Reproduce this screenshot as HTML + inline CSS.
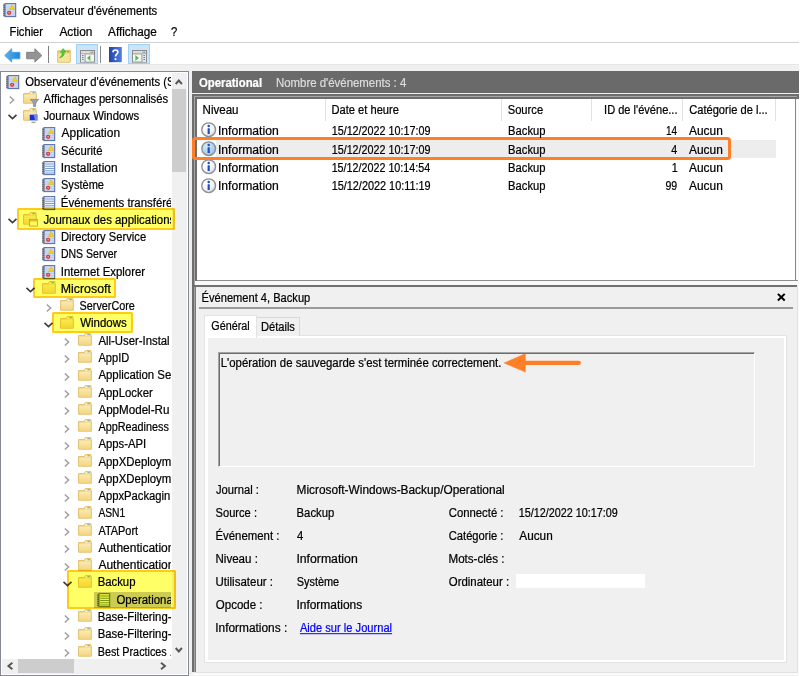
<!DOCTYPE html><html><head><meta charset="utf-8"><title>Observateur d'événements</title><style>
html,body{margin:0;padding:0}body{width:800px;height:676px;position:relative;overflow:hidden;background:#fff;font-family:"Liberation Sans",sans-serif;font-size:12px;color:#000}
.ic{position:absolute;overflow:visible}
.t{position:absolute;left:0;top:0;white-space:nowrap;-webkit-text-stroke:0.22px currentColor;line-height:16px;height:16px;transform-origin:0 0}
.b{font-weight:bold}
#tc{position:absolute;left:0;top:0;width:171.4px;height:658px;overflow:hidden}

</style></head><body>
<svg width="0" height="0" style="position:absolute"><defs><radialGradient id="ig1" cx=".35" cy=".3" r=".8"><stop offset="0" stop-color="#fff"/><stop offset=".6" stop-color="#f3f4f6"/><stop offset="1" stop-color="#c9ccd2"/></radialGradient><radialGradient id="ig2" cx=".35" cy=".3" r=".8"><stop offset="0" stop-color="#d6e8f7"/><stop offset=".6" stop-color="#b4d2ec"/><stop offset="1" stop-color="#8fb4d8"/></radialGradient><linearGradient id="fg" x1="0" x2="0" y1="0" y2="1"><stop offset="0" stop-color="#fbeab2"/><stop offset="1" stop-color="#f4d683"/></linearGradient><linearGradient id="hg" x1="0" x2="1"><stop offset="0" stop-color="#2443a8"/><stop offset="1" stop-color="#4f7fe6"/></linearGradient><linearGradient id="bg1" x1="0" x2="1"><stop offset="0" stop-color="#58b4f0"/><stop offset="1" stop-color="#1f84d8"/></linearGradient></defs></svg>
<svg class="ic" style="left:3.10px;top:2.90px" width="13.3" height="14.2" viewBox="0 0 12.8 14.2" preserveAspectRatio="none"><rect x="0.2" y="1" width="2.4" height="12.4" fill="#9a9a9a"/><rect x="1.9" y="0.6" width="10.3" height="13" fill="#cfdbf0" stroke="#5e73ac" stroke-width="1.1"/><path d="M3.2 4h8.4M3.2 6.2h8.4M3.2 8.4h8.4M3.2 10.6h8.4M3.2 12.4h8.4" stroke="#b7c8e6" stroke-width=".8"/><path d="M0.2 2.4h2M0.2 4.4h2M0.2 6.4h2M0.2 8.4h2M0.2 10.4h2M0.2 12.4h2" stroke="#6a6a6a" stroke-width=".9"/><path d="M8.7 1.8 L11.3 6.5 H6.1z" fill="#f2d21c" stroke="#dcb814" stroke-width=".5" stroke-linejoin="round"/><circle cx="5.9" cy="9.8" r="2.1" fill="#d63a44"/><circle cx="5.9" cy="9.8" r=".7" fill="#f6c4c4"/></svg>
<div style="position:absolute;left:0px;top:42px;width:800px;height:1px;background:#d0d0d0;"></div>
<div style="position:absolute;left:0px;top:64px;width:799px;height:612px;background:#f0f0f0;"></div>
<div style="position:absolute;left:0px;top:64px;width:799px;height:1px;background:#e6e6e6;"></div>
<svg class="ic" style="left:4.2px;top:47.7px" width="16.6" height="14.8" viewBox="0 0 16.6 14.8"><path d="M0.7 7.55 L7.7 0.7 V4.3 H15.9 V10.8 H7.7 V14.1z" fill="url(#bg1)" stroke="#45a3ec" stroke-width=".9" stroke-linejoin="round"/></svg>
<svg class="ic" style="left:26.2px;top:47.7px" width="16.6" height="14.8" viewBox="0 0 16.6 14.8"><path d="M15.9 7.55 L8.9 0.7 V4.3 H0.7 V10.8 H8.9 V14.1z" fill="#939393" stroke="#7c7c7c" stroke-width=".9" stroke-linejoin="round"/></svg>
<div style="position:absolute;left:48px;top:46px;width:1px;height:17px;background:#808080;"></div>
<svg class="ic" style="left:57.4px;top:48px" width="14" height="15" viewBox="0 0 14 15"><path d="M0.6 2.8 H8.2 L9 2.3 H13.3 V14.3 H0.6z" fill="#f1cd72" stroke="#dcb85c" stroke-width=".8"/><rect x="1.2" y="5.6" width="11.5" height="8.2" fill="#f9e2a0"/><rect x="10" y="3.2" width="2.2" height="1" fill="#4f9fe0"/><path d="M2.4 9.9 C4.6 8.7 5.2 6.7 5.2 4.3 L3.4 4.5 L6 0.6 L9.2 3.7 L7.4 3.9 C7.6 7.1 5.6 9.5 2.4 9.9z" fill="#45d233" stroke="#2fae22" stroke-width=".5"/></svg>
<div style="position:absolute;left:76px;top:44px;width:22px;height:20.3px;box-sizing:border-box;background:#cce4f7;border:1px solid #9fd0f8"></div>
<svg class="ic" style="left:80px;top:49.8px" width="15" height="13" viewBox="0 0 15 13"><rect x="0.5" y="0.5" width="14" height="11.6" fill="#f6f6f6" stroke="#8c8c8c"/><rect x="1" y="1" width="13" height="2.4" fill="#dcdcdc"/><path d="M0.5 3.9h14" stroke="#8c8c8c" stroke-width=".9"/><path d="M10.6 2.2h1M12.2 2.2h1" stroke="#707070" stroke-width="1"/><rect x="1" y="4.2" width="3.8" height="7.6" fill="#e4ecf8"/><path d="M5.1 4.2v7.8" stroke="#8c8c8c" stroke-width=".9"/><path d="M2 5.6h1.6M2 7.6h1.6M2 9.6h1.6" stroke="#4a7bd0" stroke-width="1"/><path d="M10.4 5 V11 L7 8z" fill="#50c03a"/></svg>
<div style="position:absolute;left:100px;top:46px;width:1px;height:17px;background:#8c8c8c;"></div>
<svg class="ic" style="left:109.3px;top:47px" width="12.8" height="15.2" viewBox="0 0 12.8 15.2"><rect width="12.8" height="15.2" fill="url(#hg)"/><path d="M4 5.3 C4 2.3 8.9 2.3 8.9 5.1 C8.9 7.1 6.5 7.2 6.5 9.5" fill="none" stroke="#fff" stroke-width="1.7"/><circle cx="6.5" cy="12.1" r="1.1" fill="#fff"/></svg>
<div style="position:absolute;left:128px;top:44px;width:22px;height:20.3px;box-sizing:border-box;background:#cce4f7;border:1px solid #9fd0f8"></div>
<svg class="ic" style="left:132px;top:49.8px" width="15" height="13" viewBox="0 0 15 13"><rect x="0.5" y="0.5" width="14" height="11.6" fill="#f6f6f6" stroke="#8c8c8c"/><rect x="1" y="1" width="13" height="2.4" fill="#dcdcdc"/><path d="M0.5 3.9h14" stroke="#8c8c8c" stroke-width=".9"/><path d="M10.6 2.2h1M12.2 2.2h1" stroke="#707070" stroke-width="1"/><rect x="10.2" y="4.2" width="3.8" height="7.6" fill="#e4ecf8"/><path d="M9.9 4.2v7.8" stroke="#8c8c8c" stroke-width=".9"/><path d="M11.4 5.6h1.6M11.4 7.6h1.6M11.4 9.6h1.6" stroke="#4a7bd0" stroke-width="1"/><path d="M3.4 5 V11 L6.8 8z" fill="#50c03a"/></svg>
<div style="position:absolute;left:0px;top:70.9px;width:189px;height:605.1px;box-sizing:border-box;background:#fff;border:1px solid #858a96"></div>
<div style="position:absolute;left:171.8px;top:73.2px;width:15.4px;height:600.5px;background:#f0f0f0;"></div>
<div style="position:absolute;left:172.3px;top:89.2px;width:13.9px;height:82.6px;background:#cdcdcd;"></div>
<svg class="ic" style="left:175.3px;top:78.7px" width="7.6" height="6" viewBox="0 0 7.6 6"><path d="M0.7 5 L3.8 1.5 L6.9 5" fill="none" stroke="#555" stroke-width="1.9"/></svg>
<svg class="ic" style="left:175.4px;top:646.8px" width="7.6" height="6" viewBox="0 0 7.6 6"><path d="M0.7 1 L3.8 4.5 L6.9 1" fill="none" stroke="#555" stroke-width="1.9"/></svg>
<div style="position:absolute;left:2.2px;top:658.5px;width:184px;height:15.2px;background:#f0f0f0;"></div>
<div style="position:absolute;left:18.2px;top:659px;width:55.7px;height:13.8px;background:#cdcdcd;"></div>
<svg class="ic" style="left:6.6px;top:661.7px" width="6.4" height="8" viewBox="0 0 6.4 8"><path d="M5.4 0.7 L1.4 4 L5.4 7.3" fill="none" stroke="#555" stroke-width="1.9"/></svg>
<svg class="ic" style="left:160.2px;top:661.7px" width="6.4" height="8" viewBox="0 0 6.4 8"><path d="M1 0.7 L5 4 L1 7.3" fill="none" stroke="#555" stroke-width="1.9"/></svg>
<div style="position:absolute;left:94.2px;top:591.5px;width:76.6px;height:16.4px;background:#cccccc;"></div>
<div style="position:absolute;left:0;top:72px;width:171.4px;height:586px;overflow:hidden">
<svg class="ic" style="left:6.40px;top:2.75px" width="13.3" height="14.2" viewBox="0 0 12.8 14.2" preserveAspectRatio="none"><rect x="0.2" y="1" width="2.4" height="12.4" fill="#9a9a9a"/><rect x="1.9" y="0.6" width="10.3" height="13" fill="#cfdbf0" stroke="#5e73ac" stroke-width="1.1"/><path d="M3.2 4h8.4M3.2 6.2h8.4M3.2 8.4h8.4M3.2 10.6h8.4M3.2 12.4h8.4" stroke="#b7c8e6" stroke-width=".8"/><path d="M0.2 2.4h2M0.2 4.4h2M0.2 6.4h2M0.2 8.4h2M0.2 10.4h2M0.2 12.4h2" stroke="#6a6a6a" stroke-width=".9"/><path d="M8.7 1.8 L11.3 6.5 H6.1z" fill="#f2d21c" stroke="#dcb814" stroke-width=".5" stroke-linejoin="round"/><circle cx="5.9" cy="9.8" r="2.1" fill="#d63a44"/><circle cx="5.9" cy="9.8" r=".7" fill="#f6c4c4"/></svg><svg class="ic" style="left:9.40px;top:24.42px" width="6" height="8" viewBox="0 0 6 8"><path d="M0.8 0.5 L4.6 4 L0.8 7.5" fill="none" stroke="#a3a3a3" stroke-width="1.6"/></svg><svg class="ic" style="left:23.10px;top:19.22px" width="14" height="13" viewBox="0 0 14 13"><path d="M0.6 2.6 H6.3 L7.4 0.6 H12.9 V2.6 H13.3 V12.2 H0.6z" fill="#f3d580" stroke="#dfbb62" stroke-width=".9"/><path d="M1.2 3.6 H12.7 V11.7 H1.2z" fill="url(#fg)"/><path d="M6.9 2.7 L7.8 1.2 H12.3 V2.7z" fill="#fdf4d6"/><rect x="9.4" y="1.1" width="2.4" height="1.2" fill="#62b5d8"/></svg><svg class="ic" style="left:29.6px;top:26.519999999999992px" width="9" height="8" viewBox="0 0 9 8"><path d="M0.3 0.4 H8.7 L5.6 3.8 V7.4 H3.4 V3.8z" fill="#8fa3bd" stroke="#5f7590" stroke-width=".6"/></svg><svg class="ic" style="left:7.50px;top:42.29px" width="9" height="6" viewBox="0 0 9 6"><path d="M0.5 0.8 L4.5 4.6 L8.5 0.8" fill="none" stroke="#3c3c3c" stroke-width="1.6"/></svg><svg class="ic" style="left:23.10px;top:36.49px" width="14" height="13" viewBox="0 0 14 13"><path d="M0.6 2.6 H6.3 L7.4 0.6 H12.9 V2.6 H13.3 V12.2 H0.6z" fill="#f3d580" stroke="#dfbb62" stroke-width=".9"/><path d="M1.2 3.6 H12.7 V11.7 H1.2z" fill="url(#fg)"/><path d="M6.9 2.7 L7.8 1.2 H12.3 V2.7z" fill="#fdf4d6"/><rect x="9.4" y="1.1" width="2.4" height="1.2" fill="#62b5d8"/></svg><svg class="ic" style="left:29.400000000000002px;top:42.190000000000005px" width="9" height="9" viewBox="0 0 9 9"><rect x="0.3" y="0.3" width="8.4" height="6.3" fill="#1a2fd0" stroke="#dfe6f5" stroke-width=".6"/><path d="M4.6 0.6 L8.4 0.6 V6.2 H6z" fill="#6f8af0"/><path d="M2.5 8.3h4" stroke="#777" stroke-width=".9"/></svg><svg class="ic" style="left:42.10px;top:54.56px" width="13.3" height="14.2" viewBox="0 0 12.8 14.2" preserveAspectRatio="none"><rect x="0.2" y="1" width="2.4" height="12.4" fill="#9a9a9a"/><rect x="1.9" y="0.6" width="10.3" height="13" fill="#cfdbf0" stroke="#5e73ac" stroke-width="1.1"/><path d="M3.2 4h8.4M3.2 6.2h8.4M3.2 8.4h8.4M3.2 10.6h8.4M3.2 12.4h8.4" stroke="#b7c8e6" stroke-width=".8"/><path d="M0.2 2.4h2M0.2 4.4h2M0.2 6.4h2M0.2 8.4h2M0.2 10.4h2M0.2 12.4h2" stroke="#6a6a6a" stroke-width=".9"/><path d="M8.7 1.8 L11.3 6.5 H6.1z" fill="#f2d21c" stroke="#dcb814" stroke-width=".5" stroke-linejoin="round"/><circle cx="5.9" cy="9.8" r="2.1" fill="#d63a44"/><circle cx="5.9" cy="9.8" r=".7" fill="#f6c4c4"/></svg><svg class="ic" style="left:42.10px;top:71.83px" width="13.3" height="14.2" viewBox="0 0 12.8 14.2" preserveAspectRatio="none"><rect x="0.2" y="1" width="2.4" height="12.4" fill="#9a9a9a"/><rect x="1.9" y="0.6" width="10.3" height="13" fill="#cfdbf0" stroke="#5e73ac" stroke-width="1.1"/><path d="M3.2 4h8.4M3.2 6.2h8.4M3.2 8.4h8.4M3.2 10.6h8.4M3.2 12.4h8.4" stroke="#b7c8e6" stroke-width=".8"/><path d="M0.2 2.4h2M0.2 4.4h2M0.2 6.4h2M0.2 8.4h2M0.2 10.4h2M0.2 12.4h2" stroke="#6a6a6a" stroke-width=".9"/><path d="M8.7 1.8 L11.3 6.5 H6.1z" fill="#f2d21c" stroke="#dcb814" stroke-width=".5" stroke-linejoin="round"/><circle cx="5.9" cy="9.8" r="2.1" fill="#d63a44"/><circle cx="5.9" cy="9.8" r=".7" fill="#f6c4c4"/></svg><svg class="ic" style="left:42.10px;top:89.10px" width="13.3" height="14.2" viewBox="0 0 12.8 14.2" preserveAspectRatio="none"><rect x="0.2" y="1" width="2.4" height="12.4" fill="#9a9a9a"/><rect x="1.9" y="0.6" width="10.3" height="13" fill="#eef4fb" stroke="#5e73ac" stroke-width="1.1"/><path d="M3 3.1h8.6M3 5.3h8.6M3 7.5h8.6M3 9.7h8.6M3 11.9h8.6" stroke="#7ba0d8" stroke-width="1"/><path d="M0.2 2.4h2M0.2 4.4h2M0.2 6.4h2M0.2 8.4h2M0.2 10.4h2M0.2 12.4h2" stroke="#5f5f5f" stroke-width=".9"/></svg><svg class="ic" style="left:42.10px;top:106.37px" width="13.3" height="14.2" viewBox="0 0 12.8 14.2" preserveAspectRatio="none"><rect x="0.2" y="1" width="2.4" height="12.4" fill="#9a9a9a"/><rect x="1.9" y="0.6" width="10.3" height="13" fill="#cfdbf0" stroke="#5e73ac" stroke-width="1.1"/><path d="M3.2 4h8.4M3.2 6.2h8.4M3.2 8.4h8.4M3.2 10.6h8.4M3.2 12.4h8.4" stroke="#b7c8e6" stroke-width=".8"/><path d="M0.2 2.4h2M0.2 4.4h2M0.2 6.4h2M0.2 8.4h2M0.2 10.4h2M0.2 12.4h2" stroke="#6a6a6a" stroke-width=".9"/><path d="M8.7 1.8 L11.3 6.5 H6.1z" fill="#f2d21c" stroke="#dcb814" stroke-width=".5" stroke-linejoin="round"/><circle cx="5.9" cy="9.8" r="2.1" fill="#d63a44"/><circle cx="5.9" cy="9.8" r=".7" fill="#f6c4c4"/></svg><svg class="ic" style="left:42.10px;top:123.64px" width="13.3" height="14.2" viewBox="0 0 12.8 14.2" preserveAspectRatio="none"><rect x="0.2" y="1" width="2.4" height="12.4" fill="#9a9a9a"/><rect x="1.9" y="0.6" width="10.3" height="13" fill="#eef4fb" stroke="#5e73ac" stroke-width="1.1"/><path d="M3 3.1h8.6M3 5.3h8.6M3 7.5h8.6M3 9.7h8.6M3 11.9h8.6" stroke="#7ba0d8" stroke-width="1"/><path d="M0.2 2.4h2M0.2 4.4h2M0.2 6.4h2M0.2 8.4h2M0.2 10.4h2M0.2 12.4h2" stroke="#5f5f5f" stroke-width=".9"/></svg><svg class="ic" style="left:7.50px;top:145.91px" width="9" height="6" viewBox="0 0 9 6"><path d="M0.5 0.8 L4.5 4.6 L8.5 0.8" fill="none" stroke="#3c3c3c" stroke-width="1.6"/></svg><svg class="ic" style="left:23.10px;top:140.11px" width="14" height="13" viewBox="0 0 14 13"><path d="M0.6 2.6 H6.3 L7.4 0.6 H12.9 V2.6 H13.3 V12.2 H0.6z" fill="#f3d580" stroke="#dfbb62" stroke-width=".9"/><path d="M1.2 3.6 H12.7 V11.7 H1.2z" fill="url(#fg)"/><path d="M6.9 2.7 L7.8 1.2 H12.3 V2.7z" fill="#fdf4d6"/><rect x="9.4" y="1.1" width="2.4" height="1.2" fill="#62b5d8"/></svg><svg class="ic" style="left:28.900000000000002px;top:146.60999999999999px" width="9" height="8" viewBox="0 0 9 8"><rect x="0.5" y="0.5" width="8" height="6.6" fill="#fdf7d8" stroke="#b9a24a" stroke-width=".8"/><rect x="0.9" y="0.9" width="7.2" height="1.5" fill="#d8c468"/></svg><svg class="ic" style="left:42.10px;top:158.18px" width="13.3" height="14.2" viewBox="0 0 12.8 14.2" preserveAspectRatio="none"><rect x="0.2" y="1" width="2.4" height="12.4" fill="#9a9a9a"/><rect x="1.9" y="0.6" width="10.3" height="13" fill="#cfdbf0" stroke="#5e73ac" stroke-width="1.1"/><path d="M3.2 4h8.4M3.2 6.2h8.4M3.2 8.4h8.4M3.2 10.6h8.4M3.2 12.4h8.4" stroke="#b7c8e6" stroke-width=".8"/><path d="M0.2 2.4h2M0.2 4.4h2M0.2 6.4h2M0.2 8.4h2M0.2 10.4h2M0.2 12.4h2" stroke="#6a6a6a" stroke-width=".9"/><path d="M8.7 1.8 L11.3 6.5 H6.1z" fill="#f2d21c" stroke="#dcb814" stroke-width=".5" stroke-linejoin="round"/><circle cx="5.9" cy="9.8" r="2.1" fill="#d63a44"/><circle cx="5.9" cy="9.8" r=".7" fill="#f6c4c4"/></svg><svg class="ic" style="left:42.10px;top:175.45px" width="13.3" height="14.2" viewBox="0 0 12.8 14.2" preserveAspectRatio="none"><rect x="0.2" y="1" width="2.4" height="12.4" fill="#9a9a9a"/><rect x="1.9" y="0.6" width="10.3" height="13" fill="#cfdbf0" stroke="#5e73ac" stroke-width="1.1"/><path d="M3.2 4h8.4M3.2 6.2h8.4M3.2 8.4h8.4M3.2 10.6h8.4M3.2 12.4h8.4" stroke="#b7c8e6" stroke-width=".8"/><path d="M0.2 2.4h2M0.2 4.4h2M0.2 6.4h2M0.2 8.4h2M0.2 10.4h2M0.2 12.4h2" stroke="#6a6a6a" stroke-width=".9"/><path d="M8.7 1.8 L11.3 6.5 H6.1z" fill="#f2d21c" stroke="#dcb814" stroke-width=".5" stroke-linejoin="round"/><circle cx="5.9" cy="9.8" r="2.1" fill="#d63a44"/><circle cx="5.9" cy="9.8" r=".7" fill="#f6c4c4"/></svg><svg class="ic" style="left:42.10px;top:192.72px" width="13.3" height="14.2" viewBox="0 0 12.8 14.2" preserveAspectRatio="none"><rect x="0.2" y="1" width="2.4" height="12.4" fill="#9a9a9a"/><rect x="1.9" y="0.6" width="10.3" height="13" fill="#cfdbf0" stroke="#5e73ac" stroke-width="1.1"/><path d="M3.2 4h8.4M3.2 6.2h8.4M3.2 8.4h8.4M3.2 10.6h8.4M3.2 12.4h8.4" stroke="#b7c8e6" stroke-width=".8"/><path d="M0.2 2.4h2M0.2 4.4h2M0.2 6.4h2M0.2 8.4h2M0.2 10.4h2M0.2 12.4h2" stroke="#6a6a6a" stroke-width=".9"/><path d="M8.7 1.8 L11.3 6.5 H6.1z" fill="#f2d21c" stroke="#dcb814" stroke-width=".5" stroke-linejoin="round"/><circle cx="5.9" cy="9.8" r="2.1" fill="#d63a44"/><circle cx="5.9" cy="9.8" r=".7" fill="#f6c4c4"/></svg><svg class="ic" style="left:25.80px;top:214.99px" width="9" height="6" viewBox="0 0 9 6"><path d="M0.5 0.8 L4.5 4.6 L8.5 0.8" fill="none" stroke="#3c3c3c" stroke-width="1.6"/></svg><svg class="ic" style="left:41.80px;top:209.19px" width="14" height="13" viewBox="0 0 14 13"><path d="M0.6 2.6 H6.3 L7.4 0.6 H12.9 V2.6 H13.3 V12.2 H0.6z" fill="#f3d580" stroke="#dfbb62" stroke-width=".9"/><path d="M1.2 3.6 H12.7 V11.7 H1.2z" fill="url(#fg)"/><path d="M6.9 2.7 L7.8 1.2 H12.3 V2.7z" fill="#fdf4d6"/><rect x="9.4" y="1.1" width="2.4" height="1.2" fill="#62b5d8"/></svg><svg class="ic" style="left:46.30px;top:231.66px" width="6" height="8" viewBox="0 0 6 8"><path d="M0.8 0.5 L4.6 4 L0.8 7.5" fill="none" stroke="#a3a3a3" stroke-width="1.6"/></svg><svg class="ic" style="left:59.70px;top:226.46px" width="14" height="13" viewBox="0 0 14 13"><path d="M0.6 2.6 H6.3 L7.4 0.6 H12.9 V2.6 H13.3 V12.2 H0.6z" fill="#f3d580" stroke="#dfbb62" stroke-width=".9"/><path d="M1.2 3.6 H12.7 V11.7 H1.2z" fill="url(#fg)"/><path d="M6.9 2.7 L7.8 1.2 H12.3 V2.7z" fill="#fdf4d6"/><rect x="9.4" y="1.1" width="2.4" height="1.2" fill="#62b5d8"/></svg><svg class="ic" style="left:44.20px;top:249.53px" width="9" height="6" viewBox="0 0 9 6"><path d="M0.5 0.8 L4.5 4.6 L8.5 0.8" fill="none" stroke="#3c3c3c" stroke-width="1.6"/></svg><svg class="ic" style="left:59.70px;top:243.73px" width="14" height="13" viewBox="0 0 14 13"><path d="M0.6 2.6 H6.3 L7.4 0.6 H12.9 V2.6 H13.3 V12.2 H0.6z" fill="#f3d580" stroke="#dfbb62" stroke-width=".9"/><path d="M1.2 3.6 H12.7 V11.7 H1.2z" fill="url(#fg)"/><path d="M6.9 2.7 L7.8 1.2 H12.3 V2.7z" fill="#fdf4d6"/><rect x="9.4" y="1.1" width="2.4" height="1.2" fill="#62b5d8"/></svg><svg class="ic" style="left:64.30px;top:266.20px" width="6" height="8" viewBox="0 0 6 8"><path d="M0.8 0.5 L4.6 4 L0.8 7.5" fill="none" stroke="#a3a3a3" stroke-width="1.6"/></svg><svg class="ic" style="left:78.00px;top:261.00px" width="14" height="13" viewBox="0 0 14 13"><path d="M0.6 2.6 H6.3 L7.4 0.6 H12.9 V2.6 H13.3 V12.2 H0.6z" fill="#f3d580" stroke="#dfbb62" stroke-width=".9"/><path d="M1.2 3.6 H12.7 V11.7 H1.2z" fill="url(#fg)"/><path d="M6.9 2.7 L7.8 1.2 H12.3 V2.7z" fill="#fdf4d6"/><rect x="9.4" y="1.1" width="2.4" height="1.2" fill="#62b5d8"/></svg><svg class="ic" style="left:64.30px;top:283.47px" width="6" height="8" viewBox="0 0 6 8"><path d="M0.8 0.5 L4.6 4 L0.8 7.5" fill="none" stroke="#a3a3a3" stroke-width="1.6"/></svg><svg class="ic" style="left:78.00px;top:278.27px" width="14" height="13" viewBox="0 0 14 13"><path d="M0.6 2.6 H6.3 L7.4 0.6 H12.9 V2.6 H13.3 V12.2 H0.6z" fill="#f3d580" stroke="#dfbb62" stroke-width=".9"/><path d="M1.2 3.6 H12.7 V11.7 H1.2z" fill="url(#fg)"/><path d="M6.9 2.7 L7.8 1.2 H12.3 V2.7z" fill="#fdf4d6"/><rect x="9.4" y="1.1" width="2.4" height="1.2" fill="#62b5d8"/></svg><svg class="ic" style="left:64.30px;top:300.74px" width="6" height="8" viewBox="0 0 6 8"><path d="M0.8 0.5 L4.6 4 L0.8 7.5" fill="none" stroke="#a3a3a3" stroke-width="1.6"/></svg><svg class="ic" style="left:78.00px;top:295.54px" width="14" height="13" viewBox="0 0 14 13"><path d="M0.6 2.6 H6.3 L7.4 0.6 H12.9 V2.6 H13.3 V12.2 H0.6z" fill="#f3d580" stroke="#dfbb62" stroke-width=".9"/><path d="M1.2 3.6 H12.7 V11.7 H1.2z" fill="url(#fg)"/><path d="M6.9 2.7 L7.8 1.2 H12.3 V2.7z" fill="#fdf4d6"/><rect x="9.4" y="1.1" width="2.4" height="1.2" fill="#62b5d8"/></svg><svg class="ic" style="left:64.30px;top:318.01px" width="6" height="8" viewBox="0 0 6 8"><path d="M0.8 0.5 L4.6 4 L0.8 7.5" fill="none" stroke="#a3a3a3" stroke-width="1.6"/></svg><svg class="ic" style="left:78.00px;top:312.81px" width="14" height="13" viewBox="0 0 14 13"><path d="M0.6 2.6 H6.3 L7.4 0.6 H12.9 V2.6 H13.3 V12.2 H0.6z" fill="#f3d580" stroke="#dfbb62" stroke-width=".9"/><path d="M1.2 3.6 H12.7 V11.7 H1.2z" fill="url(#fg)"/><path d="M6.9 2.7 L7.8 1.2 H12.3 V2.7z" fill="#fdf4d6"/><rect x="9.4" y="1.1" width="2.4" height="1.2" fill="#62b5d8"/></svg><svg class="ic" style="left:64.30px;top:335.28px" width="6" height="8" viewBox="0 0 6 8"><path d="M0.8 0.5 L4.6 4 L0.8 7.5" fill="none" stroke="#a3a3a3" stroke-width="1.6"/></svg><svg class="ic" style="left:78.00px;top:330.08px" width="14" height="13" viewBox="0 0 14 13"><path d="M0.6 2.6 H6.3 L7.4 0.6 H12.9 V2.6 H13.3 V12.2 H0.6z" fill="#f3d580" stroke="#dfbb62" stroke-width=".9"/><path d="M1.2 3.6 H12.7 V11.7 H1.2z" fill="url(#fg)"/><path d="M6.9 2.7 L7.8 1.2 H12.3 V2.7z" fill="#fdf4d6"/><rect x="9.4" y="1.1" width="2.4" height="1.2" fill="#62b5d8"/></svg><svg class="ic" style="left:64.30px;top:352.55px" width="6" height="8" viewBox="0 0 6 8"><path d="M0.8 0.5 L4.6 4 L0.8 7.5" fill="none" stroke="#a3a3a3" stroke-width="1.6"/></svg><svg class="ic" style="left:78.00px;top:347.35px" width="14" height="13" viewBox="0 0 14 13"><path d="M0.6 2.6 H6.3 L7.4 0.6 H12.9 V2.6 H13.3 V12.2 H0.6z" fill="#f3d580" stroke="#dfbb62" stroke-width=".9"/><path d="M1.2 3.6 H12.7 V11.7 H1.2z" fill="url(#fg)"/><path d="M6.9 2.7 L7.8 1.2 H12.3 V2.7z" fill="#fdf4d6"/><rect x="9.4" y="1.1" width="2.4" height="1.2" fill="#62b5d8"/></svg><svg class="ic" style="left:64.30px;top:369.82px" width="6" height="8" viewBox="0 0 6 8"><path d="M0.8 0.5 L4.6 4 L0.8 7.5" fill="none" stroke="#a3a3a3" stroke-width="1.6"/></svg><svg class="ic" style="left:78.00px;top:364.62px" width="14" height="13" viewBox="0 0 14 13"><path d="M0.6 2.6 H6.3 L7.4 0.6 H12.9 V2.6 H13.3 V12.2 H0.6z" fill="#f3d580" stroke="#dfbb62" stroke-width=".9"/><path d="M1.2 3.6 H12.7 V11.7 H1.2z" fill="url(#fg)"/><path d="M6.9 2.7 L7.8 1.2 H12.3 V2.7z" fill="#fdf4d6"/><rect x="9.4" y="1.1" width="2.4" height="1.2" fill="#62b5d8"/></svg><svg class="ic" style="left:64.30px;top:387.09px" width="6" height="8" viewBox="0 0 6 8"><path d="M0.8 0.5 L4.6 4 L0.8 7.5" fill="none" stroke="#a3a3a3" stroke-width="1.6"/></svg><svg class="ic" style="left:78.00px;top:381.89px" width="14" height="13" viewBox="0 0 14 13"><path d="M0.6 2.6 H6.3 L7.4 0.6 H12.9 V2.6 H13.3 V12.2 H0.6z" fill="#f3d580" stroke="#dfbb62" stroke-width=".9"/><path d="M1.2 3.6 H12.7 V11.7 H1.2z" fill="url(#fg)"/><path d="M6.9 2.7 L7.8 1.2 H12.3 V2.7z" fill="#fdf4d6"/><rect x="9.4" y="1.1" width="2.4" height="1.2" fill="#62b5d8"/></svg><svg class="ic" style="left:64.30px;top:404.36px" width="6" height="8" viewBox="0 0 6 8"><path d="M0.8 0.5 L4.6 4 L0.8 7.5" fill="none" stroke="#a3a3a3" stroke-width="1.6"/></svg><svg class="ic" style="left:78.00px;top:399.16px" width="14" height="13" viewBox="0 0 14 13"><path d="M0.6 2.6 H6.3 L7.4 0.6 H12.9 V2.6 H13.3 V12.2 H0.6z" fill="#f3d580" stroke="#dfbb62" stroke-width=".9"/><path d="M1.2 3.6 H12.7 V11.7 H1.2z" fill="url(#fg)"/><path d="M6.9 2.7 L7.8 1.2 H12.3 V2.7z" fill="#fdf4d6"/><rect x="9.4" y="1.1" width="2.4" height="1.2" fill="#62b5d8"/></svg><svg class="ic" style="left:64.30px;top:421.63px" width="6" height="8" viewBox="0 0 6 8"><path d="M0.8 0.5 L4.6 4 L0.8 7.5" fill="none" stroke="#a3a3a3" stroke-width="1.6"/></svg><svg class="ic" style="left:78.00px;top:416.43px" width="14" height="13" viewBox="0 0 14 13"><path d="M0.6 2.6 H6.3 L7.4 0.6 H12.9 V2.6 H13.3 V12.2 H0.6z" fill="#f3d580" stroke="#dfbb62" stroke-width=".9"/><path d="M1.2 3.6 H12.7 V11.7 H1.2z" fill="url(#fg)"/><path d="M6.9 2.7 L7.8 1.2 H12.3 V2.7z" fill="#fdf4d6"/><rect x="9.4" y="1.1" width="2.4" height="1.2" fill="#62b5d8"/></svg><svg class="ic" style="left:64.30px;top:438.90px" width="6" height="8" viewBox="0 0 6 8"><path d="M0.8 0.5 L4.6 4 L0.8 7.5" fill="none" stroke="#a3a3a3" stroke-width="1.6"/></svg><svg class="ic" style="left:78.00px;top:433.70px" width="14" height="13" viewBox="0 0 14 13"><path d="M0.6 2.6 H6.3 L7.4 0.6 H12.9 V2.6 H13.3 V12.2 H0.6z" fill="#f3d580" stroke="#dfbb62" stroke-width=".9"/><path d="M1.2 3.6 H12.7 V11.7 H1.2z" fill="url(#fg)"/><path d="M6.9 2.7 L7.8 1.2 H12.3 V2.7z" fill="#fdf4d6"/><rect x="9.4" y="1.1" width="2.4" height="1.2" fill="#62b5d8"/></svg><svg class="ic" style="left:64.30px;top:456.17px" width="6" height="8" viewBox="0 0 6 8"><path d="M0.8 0.5 L4.6 4 L0.8 7.5" fill="none" stroke="#a3a3a3" stroke-width="1.6"/></svg><svg class="ic" style="left:78.00px;top:450.97px" width="14" height="13" viewBox="0 0 14 13"><path d="M0.6 2.6 H6.3 L7.4 0.6 H12.9 V2.6 H13.3 V12.2 H0.6z" fill="#f3d580" stroke="#dfbb62" stroke-width=".9"/><path d="M1.2 3.6 H12.7 V11.7 H1.2z" fill="url(#fg)"/><path d="M6.9 2.7 L7.8 1.2 H12.3 V2.7z" fill="#fdf4d6"/><rect x="9.4" y="1.1" width="2.4" height="1.2" fill="#62b5d8"/></svg><svg class="ic" style="left:64.30px;top:473.44px" width="6" height="8" viewBox="0 0 6 8"><path d="M0.8 0.5 L4.6 4 L0.8 7.5" fill="none" stroke="#a3a3a3" stroke-width="1.6"/></svg><svg class="ic" style="left:78.00px;top:468.24px" width="14" height="13" viewBox="0 0 14 13"><path d="M0.6 2.6 H6.3 L7.4 0.6 H12.9 V2.6 H13.3 V12.2 H0.6z" fill="#f3d580" stroke="#dfbb62" stroke-width=".9"/><path d="M1.2 3.6 H12.7 V11.7 H1.2z" fill="url(#fg)"/><path d="M6.9 2.7 L7.8 1.2 H12.3 V2.7z" fill="#fdf4d6"/><rect x="9.4" y="1.1" width="2.4" height="1.2" fill="#62b5d8"/></svg><svg class="ic" style="left:64.30px;top:490.71px" width="6" height="8" viewBox="0 0 6 8"><path d="M0.8 0.5 L4.6 4 L0.8 7.5" fill="none" stroke="#a3a3a3" stroke-width="1.6"/></svg><svg class="ic" style="left:78.00px;top:485.51px" width="14" height="13" viewBox="0 0 14 13"><path d="M0.6 2.6 H6.3 L7.4 0.6 H12.9 V2.6 H13.3 V12.2 H0.6z" fill="#f3d580" stroke="#dfbb62" stroke-width=".9"/><path d="M1.2 3.6 H12.7 V11.7 H1.2z" fill="url(#fg)"/><path d="M6.9 2.7 L7.8 1.2 H12.3 V2.7z" fill="#fdf4d6"/><rect x="9.4" y="1.1" width="2.4" height="1.2" fill="#62b5d8"/></svg><svg class="ic" style="left:62.50px;top:508.58px" width="9" height="6" viewBox="0 0 9 6"><path d="M0.5 0.8 L4.5 4.6 L8.5 0.8" fill="none" stroke="#3c3c3c" stroke-width="1.6"/></svg><svg class="ic" style="left:78.00px;top:502.78px" width="14" height="13" viewBox="0 0 14 13"><path d="M0.6 2.6 H6.3 L7.4 0.6 H12.9 V2.6 H13.3 V12.2 H0.6z" fill="#f3d580" stroke="#dfbb62" stroke-width=".9"/><path d="M1.2 3.6 H12.7 V11.7 H1.2z" fill="url(#fg)"/><path d="M6.9 2.7 L7.8 1.2 H12.3 V2.7z" fill="#fdf4d6"/><rect x="9.4" y="1.1" width="2.4" height="1.2" fill="#62b5d8"/></svg><svg class="ic" style="left:97.10px;top:520.85px" width="13.3" height="14.2" viewBox="0 0 12.8 14.2" preserveAspectRatio="none"><rect x="0.2" y="1" width="2.4" height="12.4" fill="#9a9a9a"/><rect x="1.9" y="0.6" width="10.3" height="13" fill="#eef29e" stroke="#6c7a30" stroke-width="1.1"/><path d="M3 3.1h8.6M3 5.3h8.6M3 7.5h8.6M3 9.7h8.6M3 11.9h8.6" stroke="#7f9a28" stroke-width="1"/><path d="M0.2 2.4h2M0.2 4.4h2M0.2 6.4h2M0.2 8.4h2M0.2 10.4h2M0.2 12.4h2" stroke="#5f5f5f" stroke-width=".9"/></svg><svg class="ic" style="left:64.30px;top:542.52px" width="6" height="8" viewBox="0 0 6 8"><path d="M0.8 0.5 L4.6 4 L0.8 7.5" fill="none" stroke="#a3a3a3" stroke-width="1.6"/></svg><svg class="ic" style="left:78.00px;top:537.32px" width="14" height="13" viewBox="0 0 14 13"><path d="M0.6 2.6 H6.3 L7.4 0.6 H12.9 V2.6 H13.3 V12.2 H0.6z" fill="#f3d580" stroke="#dfbb62" stroke-width=".9"/><path d="M1.2 3.6 H12.7 V11.7 H1.2z" fill="url(#fg)"/><path d="M6.9 2.7 L7.8 1.2 H12.3 V2.7z" fill="#fdf4d6"/><rect x="9.4" y="1.1" width="2.4" height="1.2" fill="#62b5d8"/></svg><svg class="ic" style="left:64.30px;top:559.79px" width="6" height="8" viewBox="0 0 6 8"><path d="M0.8 0.5 L4.6 4 L0.8 7.5" fill="none" stroke="#a3a3a3" stroke-width="1.6"/></svg><svg class="ic" style="left:78.00px;top:554.59px" width="14" height="13" viewBox="0 0 14 13"><path d="M0.6 2.6 H6.3 L7.4 0.6 H12.9 V2.6 H13.3 V12.2 H0.6z" fill="#f3d580" stroke="#dfbb62" stroke-width=".9"/><path d="M1.2 3.6 H12.7 V11.7 H1.2z" fill="url(#fg)"/><path d="M6.9 2.7 L7.8 1.2 H12.3 V2.7z" fill="#fdf4d6"/><rect x="9.4" y="1.1" width="2.4" height="1.2" fill="#62b5d8"/></svg><svg class="ic" style="left:64.30px;top:577.06px" width="6" height="8" viewBox="0 0 6 8"><path d="M0.8 0.5 L4.6 4 L0.8 7.5" fill="none" stroke="#a3a3a3" stroke-width="1.6"/></svg><svg class="ic" style="left:78.00px;top:571.86px" width="14" height="13" viewBox="0 0 14 13"><path d="M0.6 2.6 H6.3 L7.4 0.6 H12.9 V2.6 H13.3 V12.2 H0.6z" fill="#f3d580" stroke="#dfbb62" stroke-width=".9"/><path d="M1.2 3.6 H12.7 V11.7 H1.2z" fill="url(#fg)"/><path d="M6.9 2.7 L7.8 1.2 H12.3 V2.7z" fill="#fdf4d6"/><rect x="9.4" y="1.1" width="2.4" height="1.2" fill="#62b5d8"/></svg>
</div>
<div style="position:absolute;left:192.2px;top:71.2px;width:606.7px;height:21.5px;background:#6a6a6a;"></div>
<div style="position:absolute;left:192.4px;top:94.2px;width:606.4px;height:187.2px;background:#6e6e6e;"></div>
<div style="position:absolute;left:196.8px;top:98.8px;width:598.3px;height:181px;background:#fff;"></div>
<div style="position:absolute;left:194px;top:96px;width:603px;height:1px;background:#a6a6a6;"></div>
<div style="position:absolute;left:194px;top:96px;width:1px;height:184px;background:#a6a6a6;"></div>
<div style="position:absolute;left:795px;top:98.8px;width:1.1px;height:182px;background:#868686;"></div>
<div style="position:absolute;left:796.1px;top:98.8px;width:3px;height:183px;background:#fbfbfb;"></div>
<div style="position:absolute;left:192.4px;top:279.8px;width:606px;height:1.5px;background:#8e8e8e;"></div>
<div style="position:absolute;left:192.4px;top:281.3px;width:606.6px;height:4.1px;background:#f9f9f9;"></div>
<div style="position:absolute;left:192.4px;top:94.2px;width:1.6px;height:191.2px;background:#6e6e6e;"></div>
<div style="position:absolute;left:194px;top:280px;width:1px;height:5.4px;background:#a6a6a6;"></div>
<div style="position:absolute;left:195px;top:280px;width:1.8px;height:1.3px;background:#6e6e6e;"></div>
<div style="position:absolute;left:324.8px;top:99px;width:1px;height:22.3px;background:#e2e2e2;"></div>
<div style="position:absolute;left:501.0px;top:99px;width:1px;height:22.3px;background:#e2e2e2;"></div>
<div style="position:absolute;left:591.3px;top:99px;width:1px;height:22.3px;background:#e2e2e2;"></div>
<div style="position:absolute;left:681.8px;top:99px;width:1px;height:22.3px;background:#e2e2e2;"></div>
<div style="position:absolute;left:775.2px;top:99px;width:1px;height:22.3px;background:#e2e2e2;"></div>
<div style="position:absolute;left:215.8px;top:140.2px;width:560px;height:17.4px;background:#ededed;"></div>
<svg class="ic" style="left:200.60px;top:122.40px" width="15.4" height="15.4" viewBox="0 0 15.4 15.4"><circle cx="7.7" cy="7.7" r="6.9" fill="url(#ig1)" stroke="#8b8e94" stroke-width="1.3"/><circle cx="7.7" cy="4.1" r="1.25" fill="#1b4fc6"/><rect x="6.6" y="6.2" width="2.2" height="5.9" rx=".4" fill="#1b4fc6"/></svg>
<svg class="ic" style="left:200.60px;top:140.80px" width="15.4" height="15.4" viewBox="0 0 15.4 15.4"><circle cx="7.7" cy="7.7" r="6.9" fill="url(#ig2)" stroke="#8b8e94" stroke-width="1.3"/><circle cx="7.7" cy="4.1" r="1.25" fill="#1b4fc6"/><rect x="6.6" y="6.2" width="2.2" height="5.9" rx=".4" fill="#1b4fc6"/></svg>
<svg class="ic" style="left:200.60px;top:159.20px" width="15.4" height="15.4" viewBox="0 0 15.4 15.4"><circle cx="7.7" cy="7.7" r="6.9" fill="url(#ig1)" stroke="#8b8e94" stroke-width="1.3"/><circle cx="7.7" cy="4.1" r="1.25" fill="#1b4fc6"/><rect x="6.6" y="6.2" width="2.2" height="5.9" rx=".4" fill="#1b4fc6"/></svg>
<svg class="ic" style="left:200.60px;top:177.60px" width="15.4" height="15.4" viewBox="0 0 15.4 15.4"><circle cx="7.7" cy="7.7" r="6.9" fill="url(#ig1)" stroke="#8b8e94" stroke-width="1.3"/><circle cx="7.7" cy="4.1" r="1.25" fill="#1b4fc6"/><rect x="6.6" y="6.2" width="2.2" height="5.9" rx=".4" fill="#1b4fc6"/></svg>
<div style="position:absolute;left:192.2px;top:137.4px;width:538.8px;height:22.6px;box-sizing:border-box;border:3.9px solid #ff7f27;border-radius:3.5px"></div>
<div style="position:absolute;left:192.4px;top:285.4px;width:604.2px;height:1.6px;background:#707070;"></div>
<div style="position:absolute;left:192.4px;top:285.4px;width:1.4px;height:387px;background:#6c6c6c;"></div>
<div style="position:absolute;left:193.8px;top:287px;width:1.2px;height:385.4px;background:#a2a2a2;"></div>
<div style="position:absolute;left:195px;top:287px;width:1px;height:385.4px;background:#7a7a7a;"></div>
<div style="position:absolute;left:196.6px;top:287px;width:200px;height:0px;background:#fff;"></div>
<div style="position:absolute;left:796.6px;top:287px;width:1px;height:386px;background:#e1e1e1;"></div>
<div style="position:absolute;left:797.6px;top:286px;width:1.2px;height:388.6px;background:#fbfbfb;"></div>
<div style="position:absolute;left:194px;top:672.3px;width:603.5px;height:1px;background:#e1e1e1;"></div>
<div style="position:absolute;left:193px;top:673.3px;width:605.8px;height:1.3px;background:#fbfbfb;"></div>
<div style="position:absolute;left:799px;top:0px;width:1px;height:676px;background:#fff;"></div>
<svg class="ic" style="left:776.6px;top:292.8px" width="8.6" height="8.4" viewBox="0 0 8.6 8.4"><path d="M0.9 0.9 L7.7 7.5 M7.7 0.9 L0.9 7.5" stroke="#000" stroke-width="2"/></svg>
<div style="position:absolute;left:199.3px;top:307.4px;width:593.8px;height:1.6px;background:#9a9a9a;"></div>
<div style="position:absolute;left:203.8px;top:335.2px;width:582.8px;height:328px;box-sizing:border-box;border:1px solid #e3e3e3;background:#fff"></div>
<div style="position:absolute;left:207.5px;top:338.2px;width:576.4px;height:322.3px;background:#f0f0f0;"></div>
<div style="position:absolute;left:256px;top:317.2px;width:43.6px;height:18.6px;box-sizing:border-box;border:1px solid #d9d9d9;border-bottom:none;background:#f0f0f0"></div>
<div style="position:absolute;left:203.8px;top:315.2px;width:53.2px;height:23px;box-sizing:border-box;border:1px solid #e3e3e3;border-bottom:none;background:#fff"></div>
<div style="position:absolute;left:218px;top:352px;width:537.4px;height:114.6px;box-sizing:border-box;border:0.8px solid #a4a4a4;border-right:1px solid #fff;border-bottom:1px solid #fff;background:#f0f0f0"></div>
<div style="position:absolute;left:218.8px;top:352.8px;width:535.6px;height:1.5px;background:#6c6c6c;"></div>
<div style="position:absolute;left:218.8px;top:352.8px;width:1.5px;height:112.8px;background:#6c6c6c;"></div>
<svg class="ic" style="left:500px;top:350px" width="90" height="26" viewBox="0 0 90 26"><path d="M24 12.85 H78.9" stroke="#ff7f27" stroke-width="4.1" stroke-linecap="round"/><path d="M4.2 13 L25.3 3.7 V22z" fill="#ff7f27" stroke="#ff7f27" stroke-width=".6" stroke-linejoin="round"/></svg>
<div style="position:absolute;left:515.6px;top:574.2px;width:129.8px;height:14px;background:#fff;"></div>
<div id="tc"><span id="t5" class="t" style="transform:translate(25.30px,73.65px) scaleX(0.9377);">Observateur d'événements (S</span>
<span id="t6" class="t" style="transform:translate(43.62px,90.92px) scaleX(0.9343);">Affichages personnalisés</span>
<span id="t7" class="t" style="transform:translate(43.41px,108.19px) scaleX(0.9435);">Journaux Windows</span>
<span id="t8" class="t" style="transform:translate(61.62px,125.46px) scaleX(0.9955);">Application</span>
<span id="t9" class="t" style="transform:translate(60.98px,142.73px) scaleX(0.9418);">Sécurité</span>
<span id="t10" class="t" style="transform:translate(60.71px,160.00px) scaleX(0.9897);">Installation</span>
<span id="t11" class="t" style="transform:translate(61.00px,177.27px) scaleX(0.9210);">Système</span>
<span id="t12" class="t" style="transform:translate(60.87px,194.54px) scaleX(0.9500);">Événements transférés</span>
<span id="t13" class="t" style="transform:translate(43.40px,211.81px) scaleX(0.9500);">Journaux des applications et</span>
<span id="t14" class="t" style="transform:translate(60.89px,229.08px) scaleX(0.9330);">Directory Service</span>
<span id="t15" class="t" style="transform:translate(60.94px,246.35px) scaleX(0.8760);">DNS Server</span>
<span id="t16" class="t" style="transform:translate(60.75px,263.62px) scaleX(0.9513);">Internet Explorer</span>
<span id="t17" class="t" style="transform:translate(60.80px,280.89px) scaleX(1.0292);">Microsoft</span>
<span id="t18" class="t" style="transform:translate(79.61px,298.16px) scaleX(0.8996);">ServerCore</span>
<span id="t19" class="t" style="transform:translate(80.21px,315.43px) scaleX(0.9555);">Windows</span>
<span id="t20" class="t" style="transform:translate(98.42px,332.70px) scaleX(0.9451);">All-User-Instal</span>
<span id="t21" class="t" style="transform:translate(98.42px,349.97px) scaleX(0.9229);">AppID</span>
<span id="t22" class="t" style="transform:translate(98.42px,367.24px) scaleX(0.9500);">Application Ser</span>
<span id="t23" class="t" style="transform:translate(98.42px,384.51px) scaleX(0.9486);">AppLocker</span>
<span id="t24" class="t" style="transform:translate(98.42px,401.78px) scaleX(0.9675);">AppModel-Ru</span>
<span id="t25" class="t" style="transform:translate(98.42px,419.05px) scaleX(0.9021);">AppReadiness</span>
<span id="t26" class="t" style="transform:translate(98.42px,436.32px) scaleX(0.9414);">Apps-API</span>
<span id="t27" class="t" style="transform:translate(98.42px,453.59px) scaleX(0.9500);">AppXDeployme</span>
<span id="t28" class="t" style="transform:translate(98.42px,470.86px) scaleX(0.9500);">AppXDeployme</span>
<span id="t29" class="t" style="transform:translate(98.42px,488.13px) scaleX(0.9374);">AppxPackagin</span>
<span id="t30" class="t" style="transform:translate(98.43px,505.40px) scaleX(0.8538);">ASN1</span>
<span id="t31" class="t" style="transform:translate(98.42px,522.67px) scaleX(0.9102);">ATAPort</span>
<span id="t32" class="t" style="transform:translate(98.42px,539.94px) scaleX(0.9991);">Authentication</span>
<span id="t33" class="t" style="transform:translate(98.42px,557.21px) scaleX(0.9991);">Authentication</span>
<span id="t34" class="t" style="transform:translate(97.68px,574.48px) scaleX(0.9432);">Backup</span>
<span id="t35" class="t" style="transform:translate(116.40px,591.75px) scaleX(0.9500);">Operational</span>
<span id="t36" class="t" style="transform:translate(97.68px,609.02px) scaleX(0.9458);">Base-Filtering-</span>
<span id="t37" class="t" style="transform:translate(97.68px,626.29px) scaleX(0.9458);">Base-Filtering-</span>
<span id="t38" class="t" style="transform:translate(97.72px,643.56px) scaleX(0.8998);">Best Practices</span>
<span id="t39" class="t" style="transform:translate(170.52px,643.56px) scaleX(0.9500);">A</span></div>
<span id="t0" class="t" style="transform:translate(22.30px,3.00px) scaleX(0.9390);">Observateur d'événements</span>
<span id="t1" class="t" style="transform:translate(9.59px,23.65px) scaleX(0.9280);">Fichier</span>
<span id="t2" class="t" style="transform:translate(59.42px,23.65px) scaleX(0.9911);">Action</span>
<span id="t3" class="t" style="transform:translate(108.12px,23.65px) scaleX(0.9785);">Affichage</span>
<span id="t4" class="t" style="transform:translate(171.08px,23.65px) scaleX(0.9400);">?</span>
<span id="t40" class="t b" style="transform:translate(198.90px,74.90px) scaleX(0.9476);color:#fff">Operational</span>
<span id="t41" class="t" style="transform:translate(275.97px,74.90px) scaleX(0.9509);color:#dcdcdc">Nombre d'événements : 4</span>
<span id="t42" class="t" style="transform:translate(202.56px,102.20px) scaleX(0.9617);">Niveau</span>
<span id="t43" class="t" style="transform:translate(331.49px,102.20px) scaleX(0.9274);">Date et heure</span>
<span id="t44" class="t" style="transform:translate(507.69px,102.20px) scaleX(0.9323);">Source</span>
<span id="t45" class="t" style="transform:translate(604.08px,102.20px) scaleX(0.9216);">ID de l'événe...</span>
<span id="t46" class="t" style="transform:translate(689.16px,102.20px) scaleX(0.9267);">Catégorie de l...</span>
<span id="t47" class="t" style="transform:translate(217.89px,123.20px) scaleX(1.0130);">Information</span>
<span id="t48" class="t" style="transform:translate(331.65px,123.20px) scaleX(0.8980);">15/12/2022 10:17:09</span>
<span id="t49" class="t" style="transform:translate(508.09px,123.20px) scaleX(0.9328);">Backup</span>
<span id="t50" class="t" style="transform:translate(689.02px,123.20px) scaleX(0.9922);">Aucun</span>
<span id="t51" class="t" style="transform:translate(666.00px,123.20px) scaleX(0.8314);">14</span>
<span id="t52" class="t" style="transform:translate(217.89px,141.60px) scaleX(1.0130);">Information</span>
<span id="t53" class="t" style="transform:translate(331.65px,141.60px) scaleX(0.8980);">15/12/2022 10:17:09</span>
<span id="t54" class="t" style="transform:translate(508.09px,141.60px) scaleX(0.9328);">Backup</span>
<span id="t55" class="t" style="transform:translate(689.02px,141.60px) scaleX(0.9922);">Aucun</span>
<span id="t56" class="t" style="transform:translate(671.29px,141.60px) scaleX(0.8879);">4</span>
<span id="t57" class="t" style="transform:translate(217.89px,160.00px) scaleX(1.0130);">Information</span>
<span id="t58" class="t" style="transform:translate(331.65px,160.00px) scaleX(0.8949);">15/12/2022 10:14:54</span>
<span id="t59" class="t" style="transform:translate(508.09px,160.00px) scaleX(0.9328);">Backup</span>
<span id="t60" class="t" style="transform:translate(689.02px,160.00px) scaleX(0.9922);">Aucun</span>
<span id="t61" class="t" style="transform:translate(671.85px,160.00px) scaleX(0.9000);">1</span>
<span id="t62" class="t" style="transform:translate(217.89px,178.40px) scaleX(1.0130);">Information</span>
<span id="t63" class="t" style="transform:translate(331.64px,178.40px) scaleX(0.9064);">15/12/2022 10:11:19</span>
<span id="t64" class="t" style="transform:translate(508.09px,178.40px) scaleX(0.9328);">Backup</span>
<span id="t65" class="t" style="transform:translate(689.02px,178.40px) scaleX(0.9922);">Aucun</span>
<span id="t66" class="t" style="transform:translate(665.47px,178.40px) scaleX(0.8783);">99</span>
<span id="t67" class="t" style="transform:translate(201.59px,289.60px) scaleX(0.9254);">Événement 4, Backup</span>
<span id="t68" class="t" style="transform:translate(211.37px,318.20px) scaleX(0.8979);">Général</span>
<span id="t69" class="t" style="transform:translate(260.99px,319.00px) scaleX(0.9249);">Détails</span>
<span id="t70" class="t" style="transform:translate(220.77px,355.40px) scaleX(0.9479);">L'opération de sauvegarde s'est terminée correctement.</span>
<span id="t71" class="t" style="transform:translate(216.01px,482.20px) scaleX(0.9313);">Journal :</span>
<span id="t72" class="t" style="transform:translate(296.54px,482.20px) scaleX(0.9878);">Microsoft-Windows-Backup/Operational</span>
<span id="t73" class="t" style="transform:translate(215.59px,505.20px) scaleX(0.9258);">Source :</span>
<span id="t74" class="t" style="transform:translate(296.58px,505.20px) scaleX(0.9406);">Backup</span>
<span id="t75" class="t" style="transform:translate(215.47px,528.20px) scaleX(0.9486);">Événement :</span>
<span id="t76" class="t" style="transform:translate(297.08px,528.20px) scaleX(0.9400);">4</span>
<span id="t77" class="t" style="transform:translate(215.46px,551.20px) scaleX(0.9640);">Niveau :</span>
<span id="t78" class="t" style="transform:translate(296.38px,551.20px) scaleX(1.0215);">Information</span>
<span id="t79" class="t" style="transform:translate(215.52px,574.20px) scaleX(0.9575);">Utilisateur :</span>
<span id="t80" class="t" style="transform:translate(296.71px,574.20px) scaleX(0.9100);">Système</span>
<span id="t81" class="t" style="transform:translate(215.79px,597.20px) scaleX(0.9592);">Opcode :</span>
<span id="t82" class="t" style="transform:translate(296.40px,597.20px) scaleX(0.9970);">Informations</span>
<span id="t83" class="t" style="transform:translate(215.31px,620.20px) scaleX(0.9892);">Informations :</span>
<span id="t84" class="t" style="transform:translate(299.92px,620.20px) scaleX(0.9271);color:#0000ff;text-decoration:underline">Aide sur le Journal</span>
<span id="t85" class="t" style="transform:translate(448.75px,505.20px) scaleX(0.9434);">Connecté :</span>
<span id="t86" class="t" style="transform:translate(448.75px,528.20px) scaleX(0.9307);">Catégorie :</span>
<span id="t87" class="t" style="transform:translate(448.46px,551.20px) scaleX(0.9676);">Mots-clés :</span>
<span id="t88" class="t" style="transform:translate(448.80px,574.20px) scaleX(0.9513);">Ordinateur :</span>
<span id="t89" class="t" style="transform:translate(518.65px,505.20px) scaleX(0.8999);">15/12/2022 10:17:09</span>
<span id="t90" class="t" style="transform:translate(519.32px,528.20px) scaleX(0.9802);">Aucun</span>
<div style="position:absolute;left:17.4px;top:208.4px;width:157.2px;height:21.4px;box-sizing:border-box;background:#ffff66;border:2px solid #ffca18;border-radius:1.5px;mix-blend-mode:multiply"></div>
<div style="position:absolute;left:32.8px;top:277.7px;width:83.0px;height:20.6px;box-sizing:border-box;background:#ffff66;border:2px solid #ffca18;border-radius:1.5px;mix-blend-mode:multiply"></div>
<div style="position:absolute;left:52.1px;top:311.8px;width:81.1px;height:20.9px;box-sizing:border-box;background:#ffff66;border:2px solid #ffca18;border-radius:1.5px;mix-blend-mode:multiply"></div>
<div style="position:absolute;left:67.4px;top:569.6px;width:108.5px;height:39.8px;box-sizing:border-box;background:#ffff66;border:2px solid #ffca18;border-radius:1.5px;mix-blend-mode:multiply"></div>
</body></html>
